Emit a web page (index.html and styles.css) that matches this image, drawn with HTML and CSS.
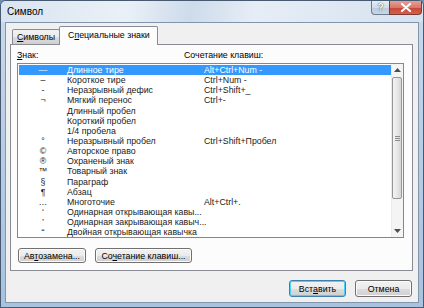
FILE: index.html
```html
<!DOCTYPE html>
<html lang="ru">
<head>
    <meta charset="UTF-8">
    <title>Символ</title>
    <link rel="stylesheet" href="styles.css">
</head>
<body>
    <div class="window">
        <!-- Title bar -->
        <div class="titlebar">
            <span class="title">Символ</span>
            <div class="caption-btns">
                <div class="cap-btn help">?</div>
                <div class="cap-btn close">
                    <svg width="12" height="9" viewBox="0 0 12 9">
                        <path d="M2 1 L10 8 M10 1 L2 8" stroke="#fff" stroke-width="2.2" stroke-linecap="round"/>
                    </svg>
                </div>
            </div>
        </div>

        <div class="client">
            <div class="tabs">
                <div class="tab"><u>С</u>имволы</div>
                <div class="tab active">С<u>п</u>ециальные знаки</div>
            </div>

            <div class="panel">
                <div class="headers">
                    <span class="col-sign"><u>З</u>нак:</span>
                    <span>Сочетание клавиш:</span>
                </div>

                <div class="listbox">
                    <div class="rows">
                        <div class="row selected"><span class="sym">—</span><span class="name">Длинное тире</span><span class="keys">Alt+Ctrl+Num -</span></div>
                        <div class="row"><span class="sym">–</span><span class="name">Короткое тире</span><span class="keys">Ctrl+Num -</span></div>
                        <div class="row"><span class="sym">-</span><span class="name">Неразрывный дефис</span><span class="keys">Ctrl+Shift+_</span></div>
                        <div class="row"><span class="sym">¬</span><span class="name">Мягкий перенос</span><span class="keys">Ctrl+-</span></div>
                        <div class="row"><span class="sym"></span><span class="name">Длинный пробел</span><span class="keys"></span></div>
                        <div class="row"><span class="sym"></span><span class="name">Короткий пробел</span><span class="keys"></span></div>
                        <div class="row"><span class="sym"></span><span class="name">1/4 пробела</span><span class="keys"></span></div>
                        <div class="row"><span class="sym">°</span><span class="name">Неразрывный пробел</span><span class="keys">Ctrl+Shift+Пробел</span></div>
                        <div class="row"><span class="sym">©</span><span class="name">Авторское право</span><span class="keys"></span></div>
                        <div class="row"><span class="sym">®</span><span class="name">Охраненый знак</span><span class="keys"></span></div>
                        <div class="row"><span class="sym">™</span><span class="name">Товарный знак</span><span class="keys"></span></div>
                        <div class="row"><span class="sym">§</span><span class="name">Параграф</span><span class="keys"></span></div>
                        <div class="row"><span class="sym">¶</span><span class="name">Абзац</span><span class="keys"></span></div>
                        <div class="row"><span class="sym">…</span><span class="name">Многоточие</span><span class="keys">Alt+Ctrl+.</span></div>
                        <div class="row"><span class="sym">‘</span><span class="name">Одинарная открывающая кавы...</span><span class="keys"></span></div>
                        <div class="row"><span class="sym">’</span><span class="name">Одинарная закрывающая кавыч...</span><span class="keys"></span></div>
                        <div class="row"><span class="sym">“</span><span class="name">Двойная открывающая кавычка</span><span class="keys"></span></div>
                    </div>

                    <div class="scrollbar">
                        <div class="sb-arrow">
                            <svg width="7" height="4" viewBox="0 0 7 4"><path d="M0 4 L3.5 0 L7 4 Z" fill="#4d4d4d"/></svg>
                        </div>
                        <div class="sb-thumb">
                            <svg width="5" height="5" viewBox="0 0 5 5"><path d="M0 0.5 H5 M0 2.5 H5 M0 4.5 H5" stroke="#8a8a8a" stroke-width="1"/></svg>
                        </div>
                        <div class="sb-track"></div>
                        <div class="sb-arrow">
                            <svg width="7" height="4" viewBox="0 0 7 4"><path d="M0 0 L3.5 4 L7 0 Z" fill="#4d4d4d"/></svg>
                        </div>
                    </div>
                </div>

                <div class="panel-btns">
                    <button class="btn btn-auto">Ав<u>т</u>озамена...</button>
                    <button class="btn btn-keys">Со<u>ч</u>етание клавиш...</button>
                </div>
            </div>

            <div class="dialog-btns">
                <button class="btn btn-default">Вст<u>а</u>вить</button>
                <button class="btn">Отмена</button>
            </div>
        </div>
    </div>
</body>
</html>
```

FILE: styles.css
```css
/* Global */
body {
    margin: 0;
    padding: 0;
    background: #6f8fb0;
    font-family: 'Liberation Sans', Arial, sans-serif;
}

u {
    text-decoration: underline;
    text-underline-offset: 1px;
}

/* Window frame */
.window {
    width: 424px;
    height: 308px;
    box-sizing: border-box;
    border: 1px solid #475a70;
    border-radius: 6px 6px 0 0;
    padding: 0 4px 4px;
    display: flex;
    flex-direction: column;
    background: linear-gradient(180deg, #cbdbec 0%, #b9cfe6 40%, #a8c3df 100%);
}

/* Title bar */
.titlebar {
    height: 21px;
    display: flex;
    justify-content: space-between;
    align-items: flex-start;
    margin: 0 -4px;
    padding: 0 1px 0 6px;
    background: linear-gradient(100deg, #d9e4f0 0%, #eaf0f7 30%, #cddbeb 45%, #e6edf6 60%, #d6e2ef 100%);
    border-radius: 5px 5px 0 0;
}

.title {
    font-size: 10px;
    line-height: 22px;
    color: #000;
}

.caption-btns {
    display: flex;
}

.cap-btn {
    height: 14px;
    box-sizing: border-box;
    border: 1px solid #6d7c8e;
    border-top: none;
    display: flex;
    align-items: center;
    justify-content: center;
}

.help {
    width: 18px;
    border-radius: 0 0 0 4px;
    border-right: none;
    font-size: 10px;
    font-weight: bold;
    color: #fff;
    text-shadow: 0 0 1px #44556a, 0 0 1px #44556a;
    background: linear-gradient(180deg, #e6edf5 0%, #d0dce9 50%, #b9c9db 51%, #c8d7e8 100%);
}

.close {
    width: 33px;
    border-radius: 0 0 4px 0;
    border-color: #7d3a32;
    background: linear-gradient(180deg, #e5a197 0%, #d9776a 50%, #c74636 51%, #d4604c 100%);
}

/* Client area */
.client {
    flex: 1;
    border: 1px solid #8196ad;
    background: #f0f0f0;
    padding: 3px 5px 0 4px;
    display: flex;
    flex-direction: column;
    font-size: 8.8px;
    color: #000;
}

/* Tabs */
.tabs {
    display: flex;
    align-items: flex-end;
    height: 18px;
    padding-left: 2px;
    position: relative;
    z-index: 1;
}

.tab {
    height: 15px;
    box-sizing: border-box;
    padding: 0 4px;
    line-height: 14px;
    border: 1px solid #898c95;
    border-bottom: none;
    border-radius: 2px 2px 0 0;
    background: linear-gradient(180deg, #f2f2f2 0%, #ebebeb 50%, #dddddd 51%, #cfcfcf 100%);
}

.tab.active {
    height: 19px;
    margin-bottom: -1px;
    margin-left: -1px;
    padding: 0 7px 0 8px;
    line-height: 17px;
    background: #fcfcfc;
}

/* Tab panel */
.panel {
    border: 1px solid #898c95;
    background: #fcfcfc;
    padding: 0 8px 7px 6px;
    display: flex;
    flex-direction: column;
}

.headers {
    display: flex;
    height: 18px;
    line-height: 12px;
    padding-top: 4px;
    box-sizing: border-box;
}

.col-sign {
    width: 167px;
}

/* Listbox */
.listbox {
    height: 175px;
    box-sizing: border-box;
    border: 1px solid #828790;
    background: #fff;
    display: flex;
    overflow: hidden;
}

.rows {
    flex: 1;
    padding: 1px 0 0 1px;
}

.row {
    height: 10.15px;
    line-height: 10px;
    display: flex;
    white-space: nowrap;
    color: #1a1a1a;
}

.row.selected {
    background: #3399ff;
    color: #fff;
}

.sym {
    width: 48px;
    text-align: center;
}

.name {
    width: 137px;
}

.keys {
    flex: 1;
}

/* Scrollbar */
.scrollbar {
    width: 11px;
    display: flex;
    flex-direction: column;
    background: #f4f4f4;
    border-left: 1px solid #ececec;
}

.sb-arrow {
    height: 12px;
    display: flex;
    align-items: center;
    justify-content: center;
}

.sb-thumb {
    height: 122px;
    margin: 1px 1px 0 0;
    box-sizing: border-box;
    border: 1px solid #959595;
    border-radius: 2px;
    background: linear-gradient(90deg, #f3f3f3 0%, #e8e8e8 50%, #d6d6d6 100%);
    display: flex;
    align-items: center;
    justify-content: center;
}

.sb-track {
    flex: 1;
}

/* Buttons */
.panel-btns {
    display: flex;
    gap: 9px;
    margin-top: 10px;
    padding-left: 1px;
}

.btn {
    height: 15px;
    box-sizing: border-box;
    padding: 0 2px;
    font-family: inherit;
    font-size: 8.8px;
    color: #000;
    white-space: nowrap;
    border: 1px solid #707070;
    border-radius: 3px;
    background: linear-gradient(180deg, #f2f2f2 0%, #ebebeb 50%, #dddddd 51%, #cfcfcf 100%);
    box-shadow: inset 0 0 0 1px #fbfbfb;
}

.btn-auto {
    width: 68px;
}

.btn-keys {
    width: 97px;
}

.dialog-btns {
    display: flex;
    justify-content: flex-end;
    gap: 9px;
    margin-top: 9px;
    padding-right: 1px;
}

.dialog-btns .btn {
    width: 57px;
    height: 17px;
}

.btn-default {
    border-color: #3c7fb1;
    box-shadow: inset 0 0 0 1px #48d3f9;
}
```
